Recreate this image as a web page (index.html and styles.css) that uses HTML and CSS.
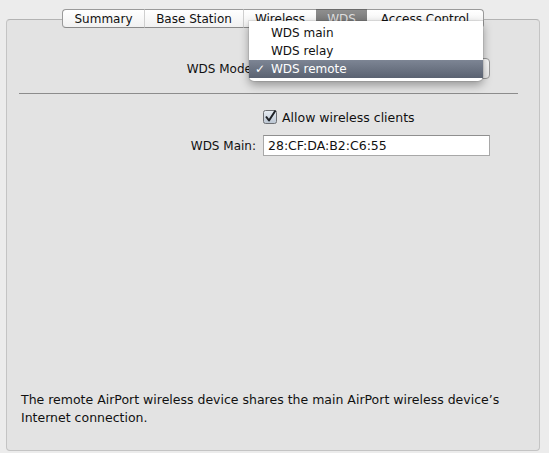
FILE: index.html
```html
<!DOCTYPE html>
<html>
<head>
<meta charset="utf-8">
<link rel="stylesheet" href="styles.css">
</head>
<body>
<div class="window">
  <div class="tabs">
    <div class="tab">Summary</div>
    <div class="tab">Base Station</div>
    <div class="tab">Wireless</div>
    <div class="tab selected">WDS</div>
    <div class="tab last">Access Control</div>
  </div>
  <div class="panel">
    <div class="form top">
      <div class="label">WDS Mode:</div>
      <div class="popup"></div>
    </div>
    <div class="sep"></div>
    <div class="form">
      <div class="label"></div>
      <label class="check">
        <svg class="cbox" width="14" height="14" viewBox="0 0 14 14">
          <defs>
            <linearGradient id="cb" x1="0" y1="0" x2="0" y2="1">
              <stop offset="0" stop-color="#e9eef4"/>
              <stop offset="1" stop-color="#b9c4d1"/>
            </linearGradient>
          </defs>
          <rect x="0.5" y="0.5" width="13" height="13" rx="2" fill="url(#cb)" stroke="#6d6f73"/>
          <path d="M3 6.5 L6 10.5 L12.5 0.5" fill="none" stroke="#1f2226" stroke-width="2" stroke-linejoin="round"/>
        </svg>
        <span>Allow wireless clients</span>
      </label>
      <div class="label">WDS Main:</div>
      <div class="field">28:CF:DA:B2:C6:55</div>
    </div>
    <p class="desc">The remote AirPort wireless device shares the main AirPort wireless device’s Internet connection.</p>
  </div>
  <div class="menu">
    <div class="item">WDS main</div>
    <div class="item">WDS relay</div>
    <div class="item current"><span class="mark">✓</span>WDS remote</div>
  </div>
</div>
</body>
</html>
```

FILE: styles.css
```css
html, body {
  margin: 0;
  padding: 0;
}
body {
  background: #ececec;
  font-family: "DejaVu Sans", sans-serif;
  font-size: 12px;
  color: #111;
  width: 549px;
  height: 453px;
  overflow: hidden;
}
.window {
  position: relative;
  padding: 9px 9px 3px 6px;
}
.tabs {
  display: flex;
  justify-content: center;
  height: 19px;
  position: relative;
  z-index: 2;
}
.tab {
  height: 19px;
  line-height: 18px;
  text-align: center;
  background: linear-gradient(#ffffff, #f1f1f1);
  border-top: 1px solid #9a9a9a;
  border-bottom: 1px solid #8a8a8a;
  box-sizing: border-box;
  position: relative;
}
.tab:first-child {
  border-left: 1px solid #9a9a9a;
  border-radius: 4px 0 0 4px;
  width: 82px;
}
.tab:nth-child(2) { width: 99px; border-left: 1px solid #cfcfcf; }
.tab:nth-child(3) { width: 73px; border-left: 1px solid #cfcfcf; }
.tab.selected {
  width: 51px;
  background: linear-gradient(#8e8e8e, #6f6f6f);
  color: #dedede;
  border-top-color: #6a6a6a;
}
.tab.last {
  width: 117px;
  border-right: 1px solid #9a9a9a;
  border-radius: 0 4px 4px 0;
}
.panel {
  margin-top: -9px;
  height: 432px;
  box-sizing: border-box;
  background: #e3e3e3;
  border: 1px solid #c4c4c4;
  border-top-color: #b3b3b3;
  border-radius: 4px;
  padding: 38px 21px 0 12px;
  display: flex;
  flex-direction: column;
}
.form {
  display: grid;
  grid-template-columns: 237px 227px;
  column-gap: 7px;
  row-gap: 10px;
  align-items: center;
}
.label {
  text-align: right;
}
.popup {
  height: 21px;
  box-sizing: border-box;
  border: 1px solid #999;
  border-radius: 4px;
  background: linear-gradient(#fdfdfd, #ebebeb);
}
.sep {
  height: 1px;
  background: #8c8c8c;
  margin: 14px 0 15px 0;
}
.check {
  display: flex;
  align-items: center;
  gap: 5px;
  height: 16px;
  font-size: 12.5px;
}
.cbox { display: block; }
.field {
  height: 21px;
  box-sizing: border-box;
  background: #fff;
  border: 1px solid #a8a8a8;
  border-top-color: #8f8f8f;
  padding-left: 4px;
  line-height: 19px;
  font-size: 12.5px;
}
.desc {
  margin: auto 0 0 2px;
  padding-bottom: 23px;
  line-height: 18px;
  width: 505px;
  font-size: 12.5px;
}
.menu {
  position: absolute;
  left: 249px;
  top: 21px;
  width: 234px;
  padding: 3px 0 3px 0;
  background: #fff;
  border-radius: 0 0 5px 5px;
  box-shadow: 0 4px 10px rgba(0,0,0,0.35), 0 0 0 1px rgba(0,0,0,0.08);
  z-index: 5;
}
.item {
  height: 18px;
  line-height: 18px;
  padding-left: 22px;
  position: relative;
}
.item.current {
  background: linear-gradient(#7d8594, #5a6271);
  color: #fff;
}
.mark {
  position: absolute;
  left: 6px;
  top: 0;
}
```
